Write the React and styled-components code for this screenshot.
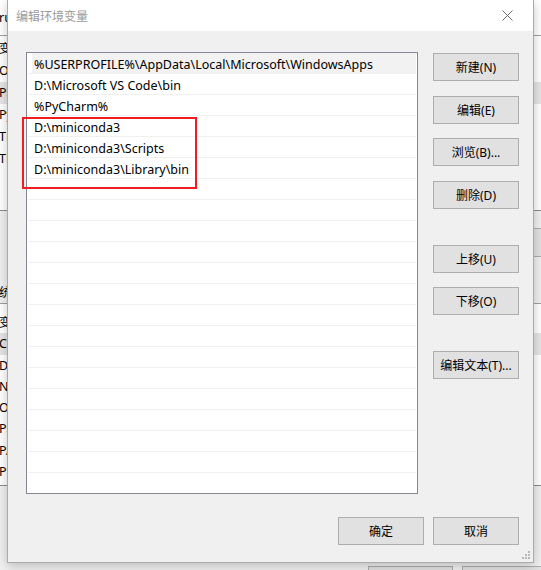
import React from "react";
import styled, { createGlobalStyle } from "styled-components";

const paths = [
  "%USERPROFILE%\\AppData\\Local\\Microsoft\\WindowsApps",
  "D:\\Microsoft VS Code\\bin",
  "%PyCharm%",
  "D:\\miniconda3",
  "D:\\miniconda3\\Scripts",
  "D:\\miniconda3\\Library\\bin",
];

const sideButtons = [
  { label: "新建(N)" },
  { label: "编辑(E)" },
  { label: "浏览(B)..." },
  { label: "删除(D)" },
  { label: "上移(U)", spaced: true },
  { label: "下移(O)" },
  { label: "编辑文本(T)...", spaced: true },
];

// only the first letters of the window behind the dialog show
const userVars = ["变", "Or", "Pa", "Py", "TE", "TM"];
const sysVars = ["变", "Co", "Dr", "NU", "OS", "Pa", "PA", "PR"];

const GlobalStyle = createGlobalStyle`
  html, body {
    margin: 0;
    padding: 0;
    background: #ffffff;
  }
  body {
    font-family: "Noto Sans", "Noto Sans CJK SC", sans-serif;
    font-size: 12px;
    color: #000;
  }
`;

const App = () => {
  const rows = Array.from({ length: 22 }, (_, i) => paths[i] || "");

  return (
    <>
      <GlobalStyle />
      <Desktop>
        <BackWindow>
          <BackHeader>ru</BackHeader>
          <BackList>
            {userVars.map((v, i) => (
              <BackRow key={v + i} selected={i === 2}>
                {v}
              </BackRow>
            ))}
          </BackList>
          <BackGap>
            <BackButton />
          </BackGap>
          <BackGroup>统</BackGroup>
          <BackList $sys>
            {sysVars.map((v, i) => (
              <BackRow key={v + i} $sys selected={i === 1}>
                {v}
              </BackRow>
            ))}
          </BackList>
          <BackFooter>
            <BackFooterButton />
            <BackFooterButton />
          </BackFooter>
        </BackWindow>

        <Dialog>
          <TitleBar>
            <Title>编辑环境变量</Title>
            <CloseButton>
              <svg width="11" height="11" viewBox="0 0 11 11">
                <path d="M0.5 0.5 L10.5 10.5 M10.5 0.5 L0.5 10.5" stroke="#6b6b6b" strokeWidth="1" fill="none" />
              </svg>
            </CloseButton>
          </TitleBar>
          <Body>
            <Main>
              <PathList>
                {rows.map((p, i) => (
                  <PathRow key={i}>
                    <PathCell selected={i === 0}>{p}</PathCell>
                  </PathRow>
                ))}
              </PathList>
              <SideColumn>
                {sideButtons.map((b) => (
                  <Button key={b.label} spaced={b.spaced}>
                    {b.label}
                  </Button>
                ))}
              </SideColumn>
            </Main>
            <Footer>
              <Button>确定</Button>
              <Button>取消</Button>
            </Footer>
            <Grip>
              <svg width="8" height="8" viewBox="0 0 8 8">
                <rect x="6" y="0" width="2" height="2" fill="#b8b8b8" />
                <rect x="3" y="3" width="2" height="2" fill="#b8b8b8" />
                <rect x="6" y="3" width="2" height="2" fill="#b8b8b8" />
                <rect x="0" y="6" width="2" height="2" fill="#b8b8b8" />
                <rect x="3" y="6" width="2" height="2" fill="#b8b8b8" />
                <rect x="6" y="6" width="2" height="2" fill="#b8b8b8" />
              </svg>
            </Grip>
          </Body>
        </Dialog>

        <Highlight />
      </Desktop>
    </>
  );
};

const Desktop = styled.div`
  position: relative;
  width: 541px;
  height: 570px;
  overflow: hidden;
  background: #ffffff;
`;

/* window behind the dialog */
const BackWindow = styled.div`
  position: absolute;
  left: -1px;
  top: 0;
  width: 560px;
  height: 600px;
  display: flex;
  flex-direction: column;
  background: #ffffff;
  font-size: 12.5px;
`;

const BackHeader = styled.div`
  height: 35px;
  line-height: 35px;
  border-bottom: 1px solid #a0a0a0;
`;

const BackList = styled.div`
  display: flex;
  flex-direction: column;
  padding-top: ${(p) => (p.$sys ? "8px" : "2px")};
  height: ${(p) => (p.$sys ? "173px" : "172px")};
  border-bottom: 1px solid #8c8c8c;
  background: #ffffff;
  overflow: hidden;
`;

const BackRow = styled.div`
  height: ${(p) => (p.$sys ? "21.3px" : "22px")};
  line-height: ${(p) => (p.$sys ? "21px" : "22px")};
  white-space: nowrap;
  flex-shrink: 0;
  background: ${(p) => (p.selected ? "#e5e5e5" : "transparent")};
`;

const BackGap = styled.div`
  height: 70px;
  background: #f0f0f0;
  display: flex;
  justify-content: flex-end;
  align-items: flex-start;
  padding-top: 17px;
  box-sizing: border-box;
`;

const BackButton = styled.div`
  width: 60px;
  height: 27px;
  background: #e1e1e1;
  border: 1px solid #adadad;
`;

const BackGroup = styled.div`
  height: 22px;
  line-height: 24px;
  border-bottom: 1px solid #a0a0a0;
  background: #f0f0f0;
`;

const BackFooter = styled.div`
  flex: 1;
  background: #f0f0f0;
  display: flex;
  gap: 9px;
  padding: 80px 0 0 369px;
`;

const BackFooterButton = styled.div`
  width: 85px;
  height: 28px;
  background: #e1e1e1;
  border: 1px solid #adadad;
  box-sizing: border-box;
`;

/* the dialog */
const Dialog = styled.div`
  position: absolute;
  left: 7px;
  top: 0;
  width: 527px;
  height: 563px;
  box-sizing: border-box;
  border: 1px solid #aaaaaa;
  border-top: none;
  background: #f0f0f0;
  display: flex;
  flex-direction: column;
  box-shadow: 0 3px 10px rgba(0, 0, 0, 0.22);
`;

const TitleBar = styled.div`
  height: 31px;
  background: #ffffff;
  display: flex;
  align-items: center;
  justify-content: space-between;
  padding: 0 20px 0 8px;
  flex-shrink: 0;
`;

const Title = styled.div`
  color: #9a9a9a;
  font-size: 12px;
`;

const CloseButton = styled.div`
  width: 11px;
  height: 11px;
  display: flex;
`;

const Body = styled.div`
  position: relative;
  flex: 1;
  display: flex;
  flex-direction: column;
  padding: 21px 14px 0 18px;
`;

const Main = styled.div`
  display: flex;
  gap: 15px;
`;

const PathList = styled.div`
  width: 392px;
  height: 442px;
  box-sizing: border-box;
  border: 1px solid #828790;
  background: #ffffff;
  padding: 0 1px;
  overflow: hidden;
`;

const PathRow = styled.div`
  height: 21px;
  box-sizing: border-box;
  border-bottom: 1px solid #f0f0f0;
  display: flex;
`;

const PathCell = styled.div`
  flex: 1;
  margin-left: 4px;
  padding: 2px 0 0 2px;
  box-sizing: border-box;
  height: 20px;
  display: flex;
  align-items: center;
  font-size: 12.5px;
  line-height: 17px;
  white-space: nowrap;
  overflow: hidden;
  background: ${(p) => (p.selected ? "#f2f2f2" : "transparent")};
`;

const SideColumn = styled.div`
  display: flex;
  flex-direction: column;
  gap: 14.5px;
  padding-top: 1px;
`;

const Button = styled.div`
  width: 86px;
  height: 28px;
  box-sizing: border-box;
  background: #e1e1e1;
  border: 1px solid #adadad;
  display: flex;
  align-items: center;
  justify-content: center;
  font-size: 12px;
  white-space: nowrap;
  margin-top: ${(p) => (p.spaced ? "21.5px" : "0")};
`;

const Footer = styled.div`
  display: flex;
  justify-content: flex-end;
  gap: 9px;
  padding-top: 23px;
`;

const Grip = styled.div`
  position: absolute;
  right: 3px;
  bottom: 3px;
  width: 8px;
  height: 8px;
  display: flex;
`;

/* red annotation box drawn over the screenshot */
const Highlight = styled.div`
  position: absolute;
  left: 22px;
  top: 117px;
  width: 175px;
  height: 72px;
  box-sizing: border-box;
  border: 2px solid #f01c24;
`;

export default App;
